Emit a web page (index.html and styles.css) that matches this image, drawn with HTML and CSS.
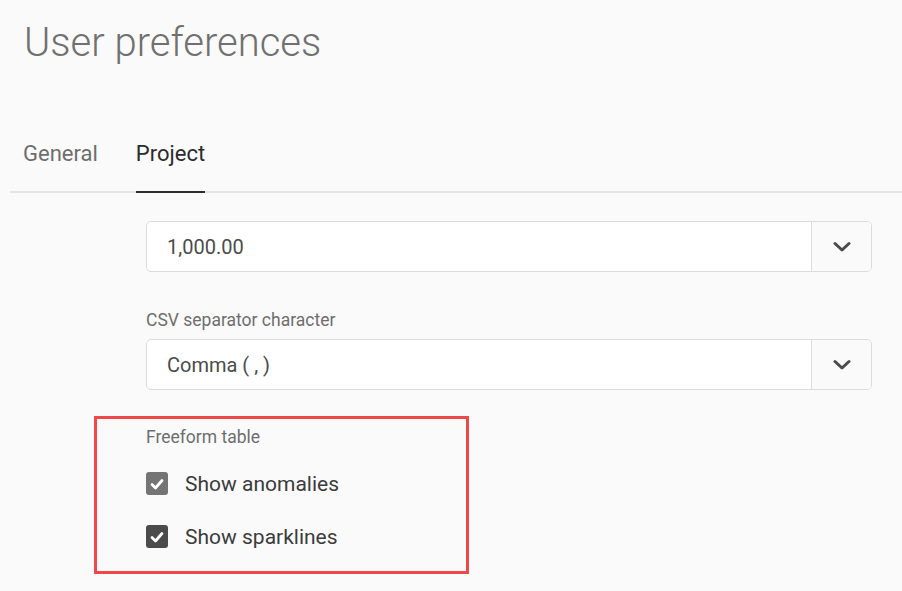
FILE: index.html
```html
<!DOCTYPE html>
<html lang="en">
<head>
  <meta charset="UTF-8">
  <meta name="viewport" content="width=device-width, initial-scale=1.0">
  <title>User preferences</title>
  <link rel="stylesheet" href="styles.css">
</head>
<body>
  <main id="preferences">
    <h1 id="page-title">User preferences</h1>

    <nav class="tabs">
      <div class="tab">General</div>
      <div class="tab selected">Project</div>
    </nav>

    <div class="field">
      <div class="picker">
        <span class="picker-value">1,000.00</span>
        <span class="picker-button">
          <svg width="18" height="12" viewBox="0 0 18 12"><path d="M2 2.5 L9 9 L16 2.5" fill="none" stroke="#4b4b4b" stroke-width="3" stroke-linecap="round" stroke-linejoin="round"/></svg>
        </span>
      </div>
    </div>

    <div class="field">
      <label class="field-label">CSV separator character</label>
      <div class="picker">
        <span class="picker-value">Comma ( , )</span>
        <span class="picker-button">
          <svg width="18" height="12" viewBox="0 0 18 12"><path d="M2 2.5 L9 9 L16 2.5" fill="none" stroke="#4b4b4b" stroke-width="3" stroke-linecap="round" stroke-linejoin="round"/></svg>
        </span>
      </div>
    </div>

    <div id="freeform-group">
      <div class="field-label">Freeform table</div>
      <label class="checkbox">
        <span class="box hovered">
          <svg width="14" height="12" viewBox="0 0 14 12"><path d="M2 6.5 L5.5 10 L12 2.5" fill="none" stroke="#fff" stroke-width="2.8" stroke-linecap="round" stroke-linejoin="round"/></svg>
        </span>
        Show anomalies
      </label>
      <label class="checkbox">
        <span class="box">
          <svg width="14" height="12" viewBox="0 0 14 12"><path d="M2 6.5 L5.5 10 L12 2.5" fill="none" stroke="#fff" stroke-width="2.8" stroke-linecap="round" stroke-linejoin="round"/></svg>
        </span>
        Show sparklines
      </label>
    </div>
  </main>
</body>
</html>
```

FILE: styles.css
```css
body {
  margin: 0;
  background: #fafafa;
  font-family: Roboto, "Open Sans", sans-serif;
  color: #4b4b4b;
}

#preferences {
  width: 902px;
  height: 591px;
  overflow: hidden;
}

#page-title {
  margin: 0 0 0 24px;
  padding-top: 17px;
  font-size: 40px;
  font-weight: 300;
  line-height: 52px;
  color: #707070;
}

.tabs {
  display: flex;
  gap: 38px;
  margin: 70px 0 0 10px;
  padding-left: 13px;
  border-bottom: 2px solid #e6e6e6;
}

.tab {
  font-size: 22px;
  line-height: 30px;
  padding-bottom: 22px;
  margin-bottom: -2px;
  border-bottom: 2px solid transparent;
  color: #6e6e6e;
}

.tab.selected {
  color: #2c2c2c;
  border-bottom-color: #2c2c2c;
}

.field {
  margin: 28px 0 0 146px;
  width: 726px;
}

.field + .field {
  margin-top: 38px;
}

.field-label {
  display: block;
  font-size: 17.5px;
  line-height: 20px;
  color: #6e6e6e;
  margin-bottom: 9px;
}

.picker {
  display: flex;
  height: 51px;
  box-sizing: border-box;
  border: 1px solid #dcdcdc;
  border-radius: 5px;
  background: #fff;
  overflow: hidden;
}

.picker-value {
  flex: 1;
  display: flex;
  align-items: center;
  padding-left: 20px;
  font-size: 20px;
}

.picker-button {
  width: 59px;
  display: flex;
  align-items: center;
  justify-content: center;
  border-left: 1px solid #dcdcdc;
  background: #fafafa;
}

#freeform-group {
  box-sizing: border-box;
  margin: 26px 0 0 94px;
  width: 375px;
  border: 3px solid #f04848;
  padding: 8px 0 8px 49px;
}

#freeform-group .field-label {
  margin-bottom: 10px;
}

.checkbox {
  display: flex;
  align-items: center;
  gap: 17px;
  font-size: 21px;
  color: #3c3c3c;
  height: 53px;
}

.checkbox .box {
  width: 22px;
  height: 23px;
  border-radius: 3px;
  background: #4b4b4b;
  display: flex;
  align-items: center;
  justify-content: center;
}

.checkbox .box.hovered {
  background: #747474;
}
```
